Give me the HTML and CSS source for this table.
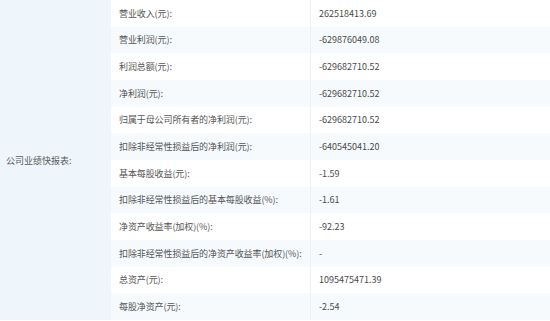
FILE: index.html
```html
<!DOCTYPE html>
<html lang="zh-CN">
<head>
<meta charset="utf-8">
<link rel="stylesheet" href="styles.css">
</head>
<body>
<div class="report">
  <div class="report-title">公司业绩快报表:</div>
  <div class="rows">
    <div class="row"><div class="k">营业收入(元):</div><div class="v">262518413.69</div></div>
    <div class="row"><div class="k">营业利润(元):</div><div class="v">-629876049.08</div></div>
    <div class="row"><div class="k">利润总额(元):</div><div class="v">-629682710.52</div></div>
    <div class="row"><div class="k">净利润(元):</div><div class="v">-629682710.52</div></div>
    <div class="row"><div class="k">归属于母公司所有者的净利润(元):</div><div class="v">-629682710.52</div></div>
    <div class="row"><div class="k">扣除非经常性损益后的净利润(元):</div><div class="v">-640545041.20</div></div>
    <div class="row"><div class="k">基本每股收益(元):</div><div class="v">-1.59</div></div>
    <div class="row"><div class="k">扣除非经常性损益后的基本每股收益(%):</div><div class="v">-1.61</div></div>
    <div class="row"><div class="k">净资产收益率(加权)(%):</div><div class="v">-92.23</div></div>
    <div class="row"><div class="k">扣除非经常性损益后的净资产收益率(加权)(%):</div><div class="v">-</div></div>
    <div class="row"><div class="k">总资产(元):</div><div class="v">1095475471.39</div></div>
    <div class="row"><div class="k">每股净资产(元):</div><div class="v">-2.54</div></div>
  </div>
</div>
</body>
</html>
```

FILE: styles.css
```css
html, body {
  margin: 0;
  padding: 0;
  background: #ffffff;
}
body {
  font-family: "Noto Sans CJK SC", "Noto Sans", sans-serif;
  font-size: 9px;
  color: #555555;
}
.report {
  display: flex;
  width: 550px;
  height: 321px;
}
.report-title {
  width: 111px;
  flex: none;
  background: #eef6fc;
  display: flex;
  align-items: center;
  padding-left: 6px;
  box-sizing: border-box;
  color: #5c5c5c;
  height: 320px;
}
.rows {
  flex: 1;
  display: grid;
  grid-template-rows: repeat(12, 26.667px);
  align-content: start;
}
.row {
  display: grid;
  grid-template-columns: 200px 1fr;
  align-items: center;
}
.row:nth-child(even) {
  background: #f6fafd;
}
.k {
  padding-left: 8px;
  height: 100%;
  display: flex;
  align-items: center;
  border-right: 1px solid #eaf0f5;
  letter-spacing: -0.1px;
}
.v {
  padding-left: 8px;
  height: 100%;
  display: flex;
  align-items: center;
  color: #4a4a4a;
}
```
